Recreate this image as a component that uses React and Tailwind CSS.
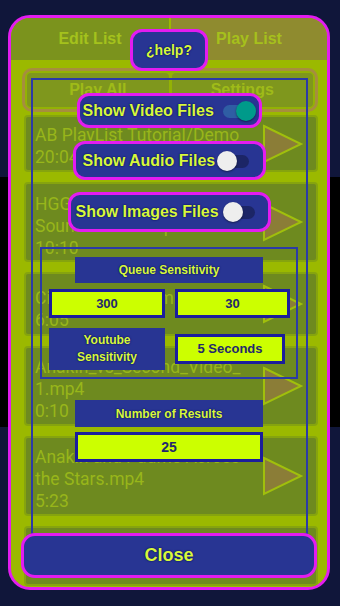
import React from "react";

const FONT = { fontFamily: "'Liberation Sans', Arial, 'DejaVu Sans', sans-serif" };
const ROBOTO = { fontFamily: "Roboto, 'Liberation Sans', sans-serif" };

function Switch({ on }) {
  return (
    <div className="relative w-[34px] h-[20px] shrink-0">
      <div
        className={
          on
            ? "absolute left-[1px] right-[2px] top-[4px] h-[13px] rounded-full bg-[#2f5ea4]"
            : "absolute left-[1px] right-[2px] top-[4px] h-[13px] rounded-full bg-[#1c2566]"
        }
      />
      <div
        className={
          on
            ? "absolute top-0 right-0 w-[20px] h-[20px] rounded-full bg-[#009a8a] shadow-[0_1px_2px_rgba(0,0,0,0.45)]"
            : "absolute top-0 left-0 w-[20px] h-[20px] rounded-full bg-[#eeeeee] shadow-[0_1px_2px_rgba(0,0,0,0.45)]"
        }
      />
    </div>
  );
}

function Triangle() {
  return (
    <svg width="42" height="40" viewBox="0 0 42 40" className="shrink-0">
      <polygon points="2,2 39,20 2,38" fill="#8b7d37" stroke="#a0bf0c" strokeWidth="2" strokeLinejoin="miter" />
    </svg>
  );
}

function Item({ lines, h, pt }) {
  return (
    <div
      className="ml-[13px] mt-[10px] w-[294px] rounded-[4px] border-2 border-[#86a40e] bg-[#6e8a1f] flex items-center"
      style={{ height: h }}
    >
      <div
        className="flex-1 self-start pl-[9px] text-[17.5px] leading-[22px] text-[#98b61a]"
        style={{ paddingTop: pt, ...ROBOTO }}
      >
        {lines.map((l, i) => (
          <div key={i} className="whitespace-nowrap">{l}</div>
        ))}
      </div>
      <div className="mr-[12px]">
        <Triangle />
      </div>
    </div>
  );
}

const LIME = "text-[#d8f83c] [text-shadow:0_0_2px_#0b1060,0_0_1px_#0b1060]";

export default function App() {
  return (
    <div className="relative w-[340px] h-[606px] overflow-hidden bg-[#10163a]" style={FONT}>
      <div className="h-[177px]" />
      <div className="h-[250px] bg-black" />

      {/* dialog */}
      <div className="absolute left-[8px] top-[15px] w-[322px] h-[575px] rounded-[22px] border-[3px] border-[#e31cf0] bg-[#9bb900] overflow-hidden">
        {/* dimmed app behind */}
        <div className="flex h-[42px]">
          <div className="w-[158px] bg-[#7b931d] flex items-center justify-center text-[16px] font-bold text-[#a4c21c]">
            Edit List
          </div>
          <div className="w-[2px] bg-[#9bb900]" />
          <div className="flex-1 bg-[#8f8b2f] flex items-center justify-center text-[16px] font-bold text-[#a6c01c]">
            Play List
          </div>
        </div>
        <div className="h-[8px]" />
        <div className="ml-[11px] w-[296px] h-[44px] rounded-[10px] border-[3px] border-[#a68e3e] bg-[#93b204] flex p-[2px] gap-[3px]">
          <div className="flex-1 bg-[#7f971d] rounded-[4px] flex items-center justify-center text-[16px] font-bold text-[#9fbb18]">
            Play All
          </div>
          <div className="flex-1 bg-[#7f971d] rounded-[4px] flex items-center justify-center text-[16px] font-bold text-[#9fbb18]">
            Settings
          </div>
        </div>
        <div className="-mt-[7px]" />
        <Item lines={["AB PlayList Tutorial/Demo", "20:04"]} h={57} pt={7} />
        <Item lines={["HGG Trailer with", "Sound Effects.mp4", "10:10"]} h={80} pt={9} />
        <Item lines={["Cinematic Intro.mp4", "6:05"]} h={64} pt={13} />
        <Item lines={["Anakin_vs_Second_Video_", "1.mp4", "0:10"]} h={80} pt={8} />
        <Item lines={["Anakin and Padme Across", "the Stars.mp4", "5:23"]} h={80} pt={8} />
        <Item lines={["", ""]} h={60} pt={8} />

        {/* help overlay */}
        <div className="absolute inset-0 flex flex-col items-center">
          <div className="mt-[11px] w-[78px] h-[42px] shrink-0 rounded-[12px] border-[3px] border-[#e31cf0] bg-[#283593] flex items-center justify-center">
            <span className={`text-[14px] font-bold ${LIME}`}>¿help?</span>
          </div>

          <div className="mt-[7px] w-[277px] h-[457px] shrink-0 border-2 border-[#2b3aa6] flex flex-col items-center">
            <div className="mt-[13px] w-[185px] h-[35px] shrink-0 rounded-[12px] border-[3px] border-[#e31cf0] bg-[#283593] flex items-center pl-[3px] pr-[3px]">
              <span className={`text-[16px] font-bold whitespace-nowrap ${LIME}`}>Show Video Files</span>
              <div className="ml-auto">
                <Switch on />
              </div>
            </div>
            <div className="mt-[13px] w-[193px] h-[39px] shrink-0 rounded-[12px] border-[3px] border-[#e31cf0] bg-[#283593] flex items-center pl-[7px] pr-[12px]">
              <span className={`text-[16px] font-bold whitespace-nowrap ${LIME}`}>Show Audio Files</span>
              <div className="ml-auto">
                <Switch on={false} />
              </div>
            </div>
            <div className="mt-[12px] w-[203px] h-[40px] shrink-0 rounded-[12px] border-[3px] border-[#e31cf0] bg-[#283593] flex items-center pl-[5px] pr-[11px]">
              <span className={`text-[16px] font-bold whitespace-nowrap ${LIME}`}>Show Images Files</span>
              <div className="ml-auto">
                <Switch on={false} />
              </div>
            </div>

            {/* sensitivity box */}
            <div className="mt-[15px] w-[258px] h-[132px] shrink-0 border-2 border-[#2b3aa6] flex flex-col">
              <div className="mt-[8px] self-center w-[188px] h-[26px] bg-[#283593] flex items-center justify-center">
                <span className={`text-[12px] font-bold ${LIME}`}>Queue Sensitivity</span>
              </div>
              <div className="mt-[6px] ml-[7px] flex gap-[10px]">
                <div className="w-[116px] h-[29px] border-[3px] border-[#1b1d9c] bg-[#ccff00] flex items-center justify-center text-[13px] font-bold text-[#23286e]">
                  300
                </div>
                <div className="w-[115px] h-[29px] border-[3px] border-[#1b1d9c] bg-[#ccff00] flex items-center justify-center text-[13px] font-bold text-[#23286e]">
                  30
                </div>
              </div>
              <div className="mt-[10px] ml-[7px] flex items-center gap-[10px]">
                <div className="w-[116px] h-[42px] bg-[#283593] flex items-center justify-center text-center">
                  <span className={`text-[12px] leading-[17px] font-bold ${LIME}`}>
                    Youtube
                    <br />
                    Sensitivity
                  </span>
                </div>
                <div className="w-[110px] h-[30px] border-[3px] border-[#1b1d9c] bg-[#ccff00] flex items-center justify-center text-[13px] font-bold text-[#23286e]">
                  5 Seconds
                </div>
              </div>
            </div>

            <div className="mt-[21px] w-[188px] h-[27px] shrink-0 bg-[#283593] flex items-center justify-center">
              <span className={`text-[12px] font-bold ${LIME}`}>Number of Results</span>
            </div>
            <div className="mt-[5px] w-[188px] h-[30px] shrink-0 border-[3px] border-[#1b1d9c] bg-[#ccff00] flex items-center justify-center text-[14px] font-bold text-[#23286e]">
              25
            </div>
          </div>

          <div className="-mt-[2px] w-[296px] h-[45px] shrink-0 rounded-[14px] border-[3px] border-[#e31cf0] bg-[#283593] flex items-center justify-center">
            <span className={`text-[18px] font-bold ${LIME}`}>Close</span>
          </div>
        </div>
      </div>
    </div>
  );
}
